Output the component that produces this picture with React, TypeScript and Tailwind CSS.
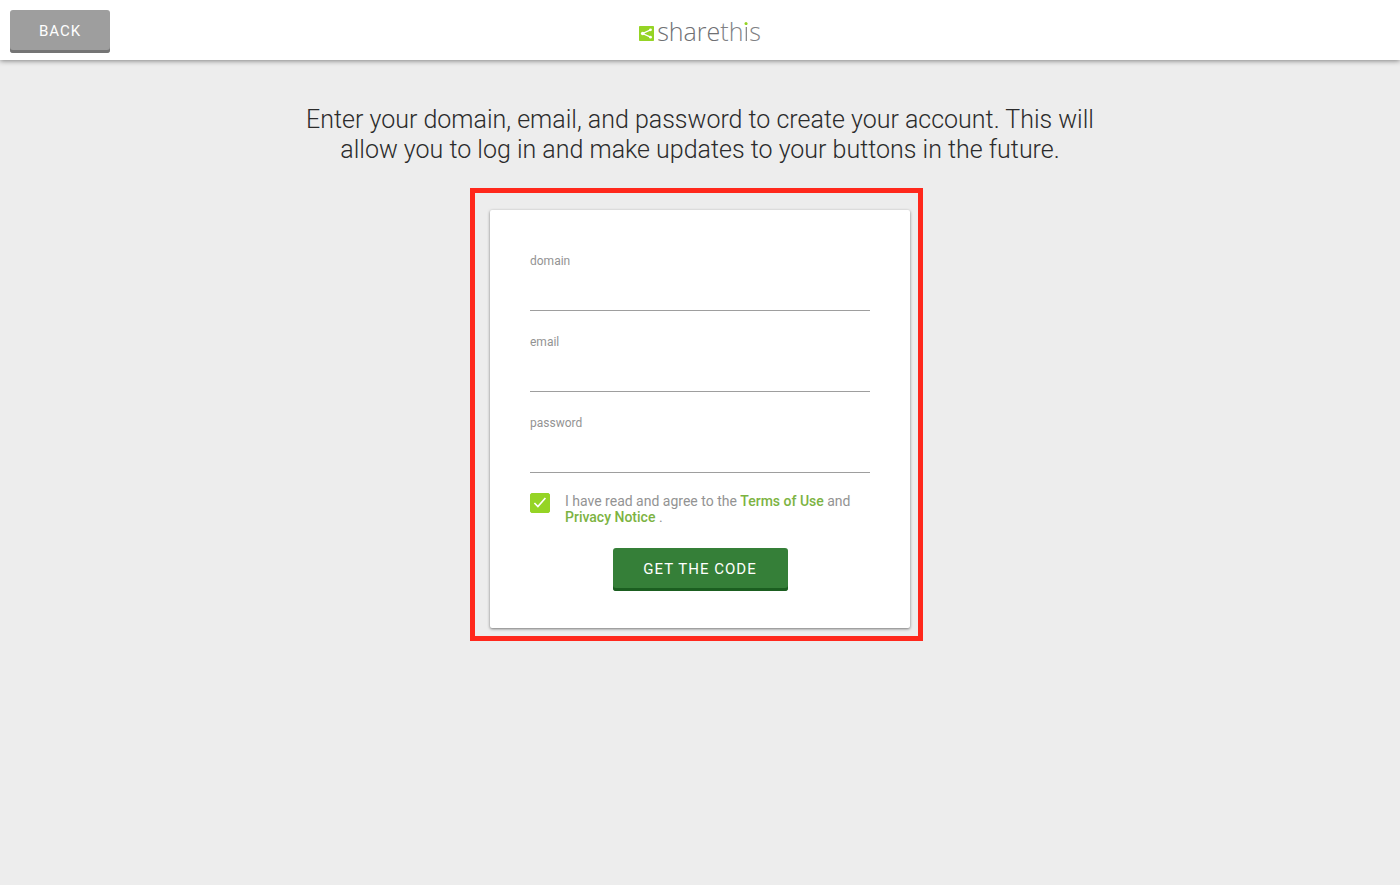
import { useState } from "react";

const fields = [
  { id: "domain", type: "text" },
  { id: "email", type: "email" },
  { id: "password", type: "password" },
];

function Logo() {
  return (
    <a href="#" aria-label="sharethis" className="flex items-center gap-[3px] self-center pt-[2px]">
      <svg viewBox="0 0 15 15" className="mt-[4px] h-[15px] w-[15px]" aria-hidden="true">
        <rect width="15" height="15" rx="0.8" fill="#95d425" />
        <path d="M11.6 3.8 L3.6 7.5 L11.6 11.2" fill="none" stroke="#fff" strokeWidth="1.3" />
        <circle cx="11.5" cy="3.8" r="1.4" fill="#fff" />
        <circle cx="3.7" cy="7.5" r="1.8" fill="#fff" />
        <circle cx="11.5" cy="11.2" r="1.4" fill="#fff" />
      </svg>
      <span className="font-['Open_Sans',sans-serif] text-[25px] leading-[30px] font-light text-[#6f7073]">
        share
        <span className="text-[#808184]">
          th
          <span className="relative bg-[linear-gradient(#95d425_12px,#808184_12px)] bg-clip-text text-transparent">
            i
            <span className="absolute top-[8px] left-1/2 h-[3px] w-[3px] -translate-x-1/2 rounded-full bg-[#95d425]" />
          </span>
          s
        </span>
      </span>
    </a>
  );
}

export default function App() {
  const [agreed, setAgreed] = useState(true);

  return (
    <div className="min-h-screen bg-[#ededed] font-[Roboto,sans-serif]">
      <header className="grid h-[60px] grid-cols-[1fr_auto_1fr] items-start bg-white px-[10px] shadow-[0_1px_5px_rgba(0,0,0,0.45)]">
        <button
          type="button"
          className="mt-[10px] h-[43px] w-[100px] justify-self-start rounded-[3px] bg-[#9e9e9e] text-[15px] tracking-[1px] text-white shadow-[inset_0_-3px_0_#757575]"
        >
          BACK
        </button>
        <Logo />
      </header>

      <main className="flex flex-col items-center px-4 pt-[45px] pb-10">
        <h1 className="max-w-[800px] text-center text-[25px] leading-[30px] font-light text-[#2b2b2b]">
          Enter your domain, email, and password to create your account. This will allow you to log
          in and make updates to your buttons in the future.
        </h1>

        <div className="relative mt-[45px] w-full max-w-[420px]">
          <form
            className="rounded-[2px] bg-white px-10 pt-[43px] pb-[37px] shadow-[0_1px_3px_rgba(0,0,0,0.5)]"
            onSubmit={(e) => e.preventDefault()}
          >
            <div className="flex flex-col gap-[23px]">
              {fields.map((f) => (
                <div key={f.id}>
                  <label htmlFor={f.id} className="block text-xs leading-4 text-[#939393]">
                    {f.id}
                  </label>
                  <input
                    id={f.id}
                    type={f.type}
                    className="block h-[42px] w-full border-b border-[#9e9e9e] bg-transparent text-base text-[#333] outline-none"
                  />
                </div>
              ))}
            </div>

            <div className="mt-5 flex gap-[15px]">
              <span className="relative h-5 w-5 shrink-0">
                <input
                  id="agree"
                  type="checkbox"
                  checked={agreed}
                  onChange={(e) => setAgreed(e.target.checked)}
                  className="block h-5 w-5 appearance-none rounded-[2px] border border-[#95d425] bg-white checked:bg-[#95d425]"
                />
                {agreed && (
                  <svg viewBox="0 0 20 20" className="pointer-events-none absolute inset-0" aria-hidden="true">
                    <path d="M4.4 10 L7.9 13.5 L15.4 5" fill="none" stroke="#fff" strokeWidth="1.7" />
                  </svg>
                )}
              </span>
              <label htmlFor="agree" className="text-sm leading-4 text-[#939393]">
                I have read and agree to the{" "}
                <a href="#terms" className="font-medium text-[#7cb342]">Terms of Use</a> and{" "}
                <a href="#privacy" className="font-medium text-[#7cb342]">Privacy Notice</a> .
              </label>
            </div>

            <button
              type="submit"
              className="mx-auto mt-[23px] block h-[43px] w-[175px] rounded-[3px] bg-[#357f38] text-[15px] tracking-[1px] text-white shadow-[inset_0_-3px_0_#1b5e20]"
            >
              GET THE CODE
            </button>
          </form>
          <div className="pointer-events-none absolute -top-[22px] -right-[13px] -bottom-[13px] -left-[20px] border-[5px] border-[#ff281c]" />
        </div>
      </main>
    </div>
  );
}
